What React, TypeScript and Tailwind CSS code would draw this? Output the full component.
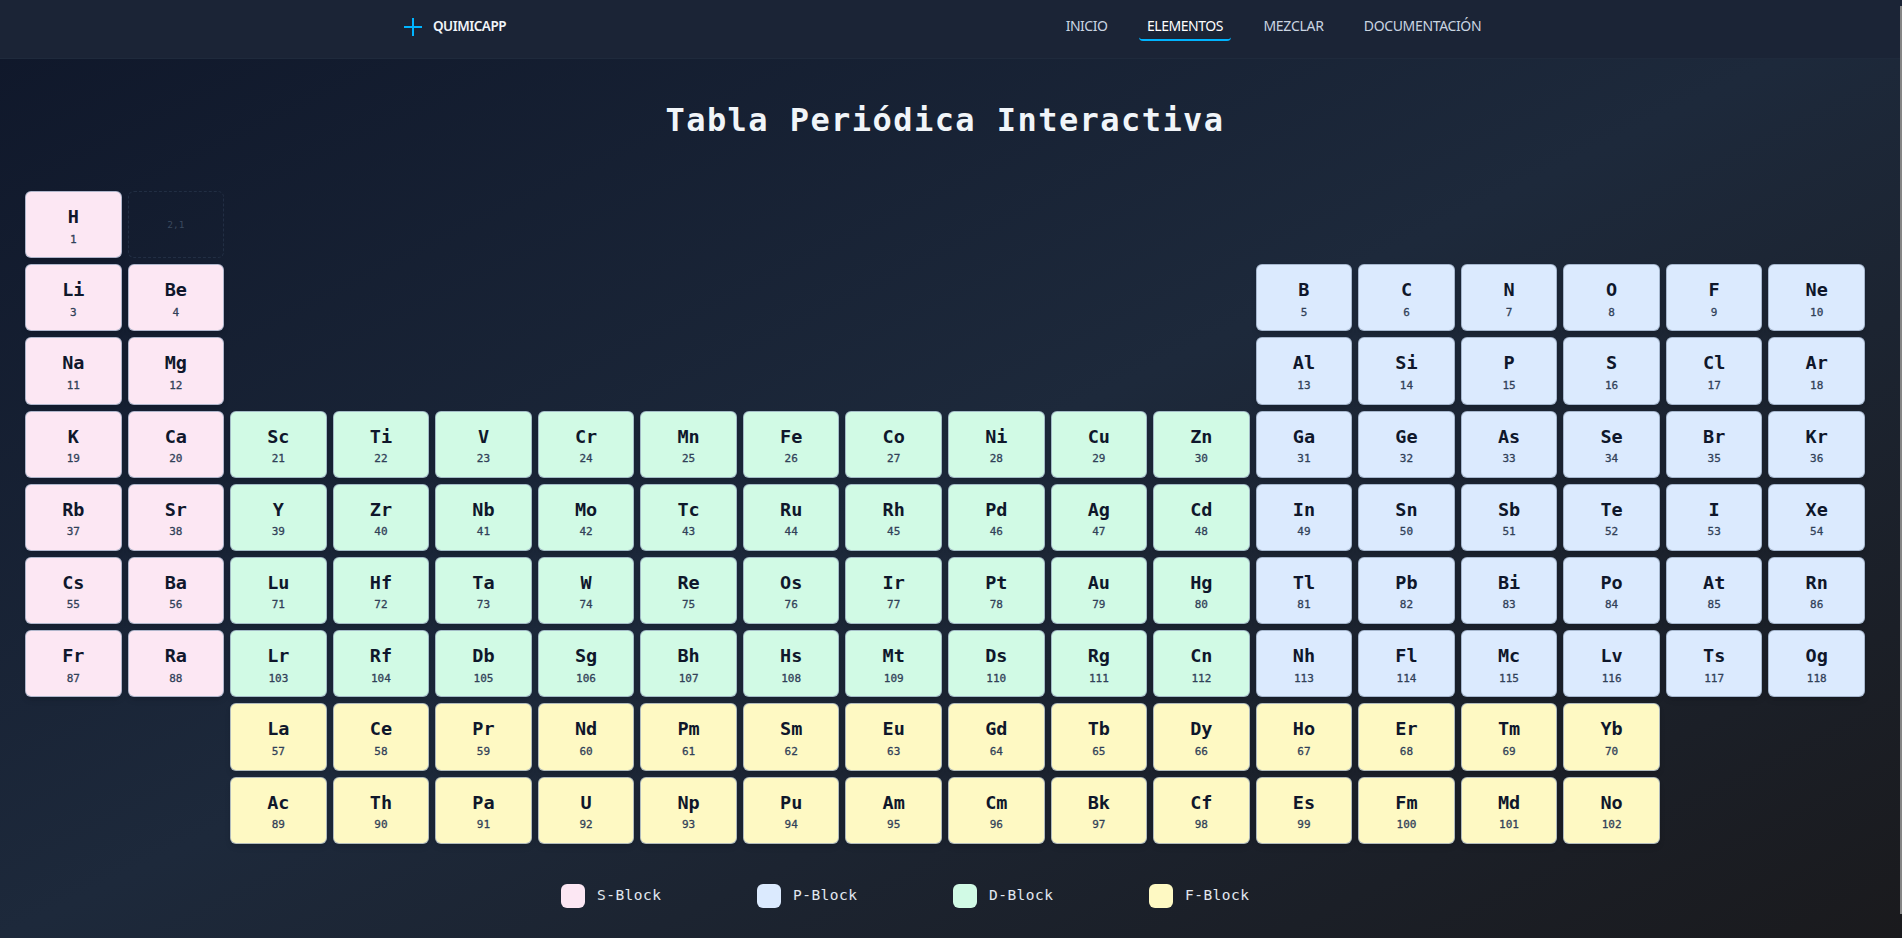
type Cell = { symbol: string; number: number; col: number; row: number };

const rows: { row: number; runs: { col: number; start: number; symbols: string }[] }[] = [
  { row: 1, runs: [{ col: 1, start: 1, symbols: 'H' }] },
  { row: 2, runs: [{ col: 1, start: 3, symbols: 'Li Be' }, { col: 13, start: 5, symbols: 'B C N O F Ne' }] },
  { row: 3, runs: [{ col: 1, start: 11, symbols: 'Na Mg' }, { col: 13, start: 13, symbols: 'Al Si P S Cl Ar' }] },
  { row: 4, runs: [{ col: 1, start: 19, symbols: 'K Ca Sc Ti V Cr Mn Fe Co Ni Cu Zn Ga Ge As Se Br Kr' }] },
  { row: 5, runs: [{ col: 1, start: 37, symbols: 'Rb Sr Y Zr Nb Mo Tc Ru Rh Pd Ag Cd In Sn Sb Te I Xe' }] },
  { row: 6, runs: [{ col: 1, start: 55, symbols: 'Cs Ba' }, { col: 3, start: 71, symbols: 'Lu Hf Ta W Re Os Ir Pt Au Hg Tl Pb Bi Po At Rn' }] },
  { row: 7, runs: [{ col: 1, start: 87, symbols: 'Fr Ra' }, { col: 3, start: 103, symbols: 'Lr Rf Db Sg Bh Hs Mt Ds Rg Cn Nh Fl Mc Lv Ts Og' }] },
  { row: 8, runs: [{ col: 3, start: 57, symbols: 'La Ce Pr Nd Pm Sm Eu Gd Tb Dy Ho Er Tm Yb' }] },
  { row: 9, runs: [{ col: 3, start: 89, symbols: 'Ac Th Pa U Np Pu Am Cm Bk Cf Es Fm Md No' }] },
];

const cells: Cell[] = rows.flatMap(({ row, runs }) =>
  runs.flatMap(({ col, start, symbols }) =>
    symbols.split(' ').map((symbol, i) => ({ symbol, number: start + i, col: col + i, row })),
  ),
);

function blockColor({ col, row }: Cell) {
  if (row >= 8) return 'bg-[#fef9c3]';
  if (col <= 2) return 'bg-[#fce7f3]';
  if (col <= 12) return 'bg-[#d1fae5]';
  return 'bg-[#dbeafe]';
}

const links = [
  { label: 'INICIO', className: 'w-[57px] tracking-[-0.5px] border-transparent text-slate-300' },
  { label: 'ELEMENTOS', className: 'w-[92px] tracking-[-0.45px] border-[#00b4ff] text-white' },
  { label: 'MEZCLAR', className: 'w-[77px] tracking-[-0.3px] border-transparent text-slate-300' },
  { label: 'DOCUMENTACIÓN', className: 'w-[133px] tracking-[-0.35px] border-transparent text-slate-300' },
];

const legend = [
  { label: 'S-Block', color: 'bg-[#fce7f3]' },
  { label: 'P-Block', color: 'bg-[#dbeafe]' },
  { label: 'D-Block', color: 'bg-[#d1fae5]' },
  { label: 'F-Block', color: 'bg-[#fef9c3]' },
];

function Header() {
  return (
    <header className="flex h-[59px] justify-between border-b border-[#1f2a3c] bg-[#1b2436] pr-[413px] pl-[404px] font-['Noto_Sans',sans-serif]">
      <div className="flex h-[53px] items-center gap-[11px]">
        <svg className="h-[18px] w-[18px]" viewBox="0 0 18 18" fill="none" stroke="#00b4ff" strokeWidth="2">
          <path d="M9 0v18M0 9h18" />
        </svg>
        <span className="text-[13.5px] font-semibold tracking-[-0.5px] text-slate-100">QUIMICAPP</span>
      </div>
      <nav className="flex items-start gap-6 pt-[9px]">
        {links.map(({ label, className }) => (
          <a
            key={label}
            className={`flex h-8 items-center justify-center rounded border-b-2 pt-[3px] text-sm ${className}`}
          >
            {label}
          </a>
        ))}
      </nav>
    </header>
  );
}

export default function App() {
  return (
    <div className="relative h-[938px] w-full overflow-hidden bg-linear-to-br/srgb from-[#0f172a] via-[#1d293b] to-[#1a1a1d] font-['DejaVu_Sans_Mono',monospace]">
      <Header />
      <main className="pr-[37px] pl-[25px]">
        <h1 className="flex h-[132px] items-center justify-center pb-[11px] text-[32px] font-bold tracking-[1.44px] text-slate-100">
          Tabla Periódica Interactiva
        </h1>
        <div className="grid auto-rows-[67.2px] grid-cols-18 gap-[6px]">
          {cells.map((cell) => (
            <div
              key={cell.number}
              className={`flex flex-col items-center rounded-md border border-slate-400/70 pt-[13px] shadow-md ${blockColor(cell)}`}
              style={{ gridColumn: cell.col, gridRow: cell.row }}
            >
              <span className="text-[18.5px] leading-6 font-bold text-slate-900">{cell.symbol}</span>
              <span className="mt-[2.5px] text-[11px] leading-4 text-slate-700 [-webkit-text-stroke:0.3px]">
                {cell.number}
              </span>
            </div>
          ))}
          <div className="col-start-2 row-start-1 flex items-center justify-center rounded-md border border-dashed border-slate-700/50 pt-px text-[9.5px] text-slate-600/80">
            2,1
          </div>
        </div>
        <div className="mt-10 flex gap-24 pl-[536px]">
          {legend.map(({ label, color }) => (
            <div key={label} className="flex w-[100px] items-center gap-3">
              <span className={`h-6 w-6 shrink-0 rounded-md ${color}`} />
              <span className="pt-px text-[14.5px] tracking-[0.47px] whitespace-nowrap text-slate-200">{label}</span>
            </div>
          ))}
        </div>
      </main>
      <div className="absolute top-[6px] right-0 h-[908px] w-[2px] bg-[#858585]" />
    </div>
  );
}
